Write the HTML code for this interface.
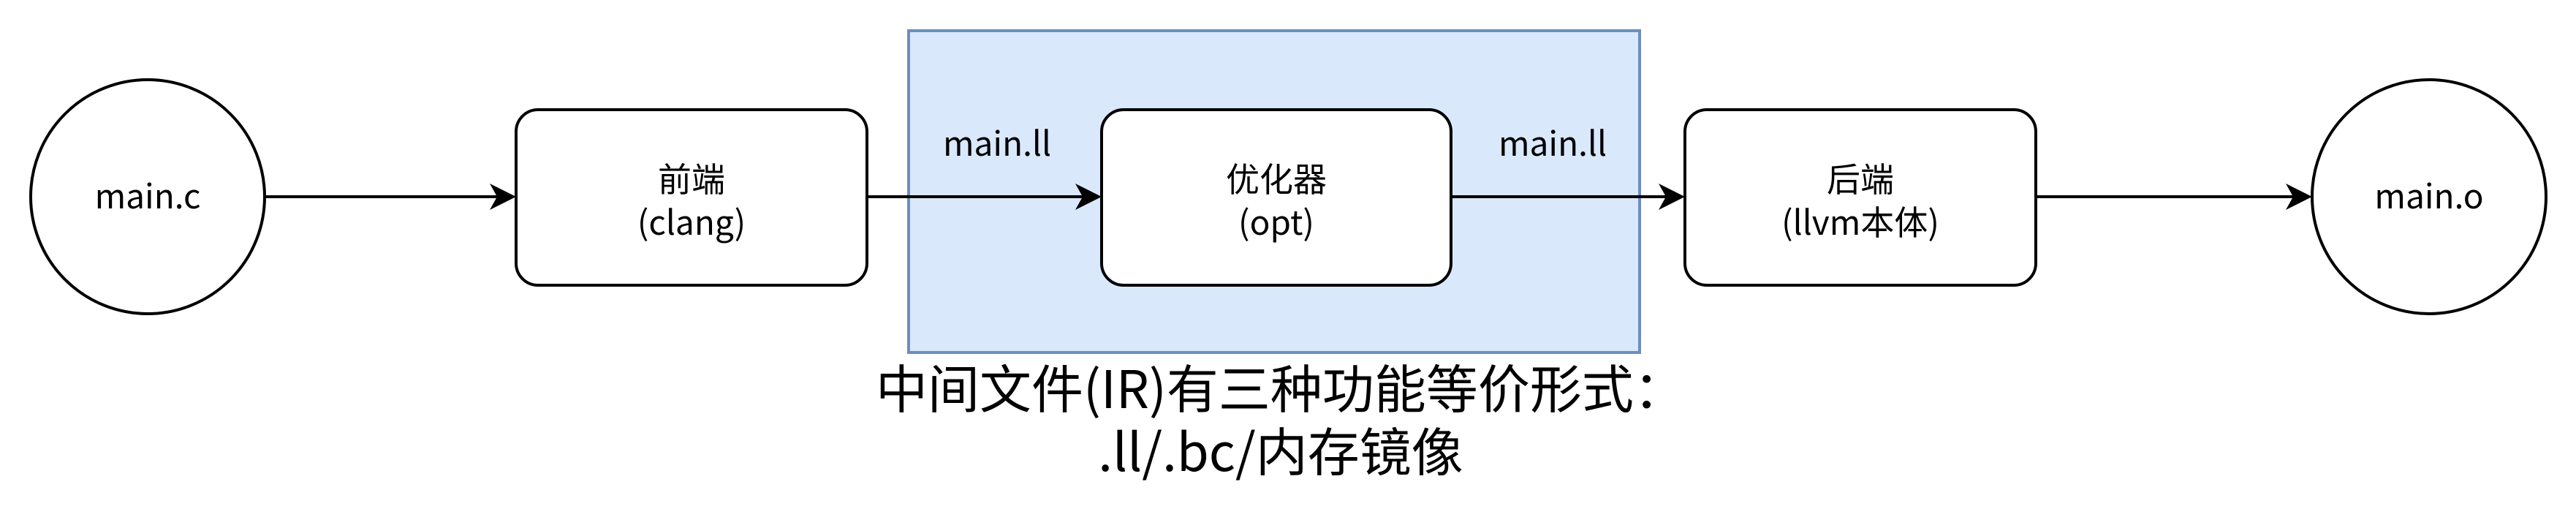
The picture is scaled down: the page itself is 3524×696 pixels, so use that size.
<!DOCTYPE html>
<html><head><meta charset="utf-8"><style>
html,body{margin:0;padding:0;background:#fff;}
svg{display:block;}
text{font-family:"Noto Sans CJK SC","Liberation Sans",sans-serif;fill:#000;}
</style></head><body>
<svg width="3524" height="696" viewBox="0 0 3524 696" xmlns="http://www.w3.org/2000/svg">
<rect x="1243" y="42" width="1000" height="440" fill="#dae8fc" stroke="#6c8ebf" stroke-width="4"/>
<g stroke="#000" stroke-width="4" fill="none">
<ellipse cx="202" cy="269" rx="160" ry="160" fill="#fff"/>
<ellipse cx="3323" cy="269" rx="160" ry="160" fill="#fff"/>
<rect x="706" y="150" width="480" height="240" rx="30" fill="#fff"/>
<rect x="1507" y="150" width="478" height="240" rx="30" fill="#fff"/>
<rect x="2305" y="150" width="480" height="240" rx="30" fill="#fff"/>
<line x1="362" y1="269" x2="690" y2="269"/>
<line x1="1186" y1="269" x2="1491" y2="269"/>
<line x1="1985" y1="269" x2="2289" y2="269"/>
<line x1="2785" y1="269" x2="3147" y2="269"/>
</g>
<g fill="#000">
<path d="M706 269 L670 251 L680 269 L670 287 Z"/>
<path d="M1507 269 L1471 251 L1481 269 L1471 287 Z"/>
<path d="M2305 269 L2269 251 L2279 269 L2269 287 Z"/>
<path d="M3163 269 L3127 251 L3137 269 L3127 287 Z"/>
</g>
<g font-size="46" text-anchor="middle">
<text x="202" y="285">main.c</text>
<text x="3323" y="285">main.o</text>
<text x="946" y="262">前端</text>
<text x="946" y="321">(clang)</text>
<text x="1746" y="262">优化器</text>
<text x="1746" y="321">(opt)</text>
<text x="2545" y="262">后端</text>
<text x="2545" y="321">(llvm本体)</text>
<text x="1364" y="213">main.ll</text>
<text x="2124" y="213">main.ll</text>
</g>
<g font-size="71" text-anchor="middle">
<text x="1752" y="558">中间文件(IR)有三种功能等价形式：</text>
<text x="1752" y="644">.ll/.bc/内存镜像</text>
</g>
</svg>
</body></html>
